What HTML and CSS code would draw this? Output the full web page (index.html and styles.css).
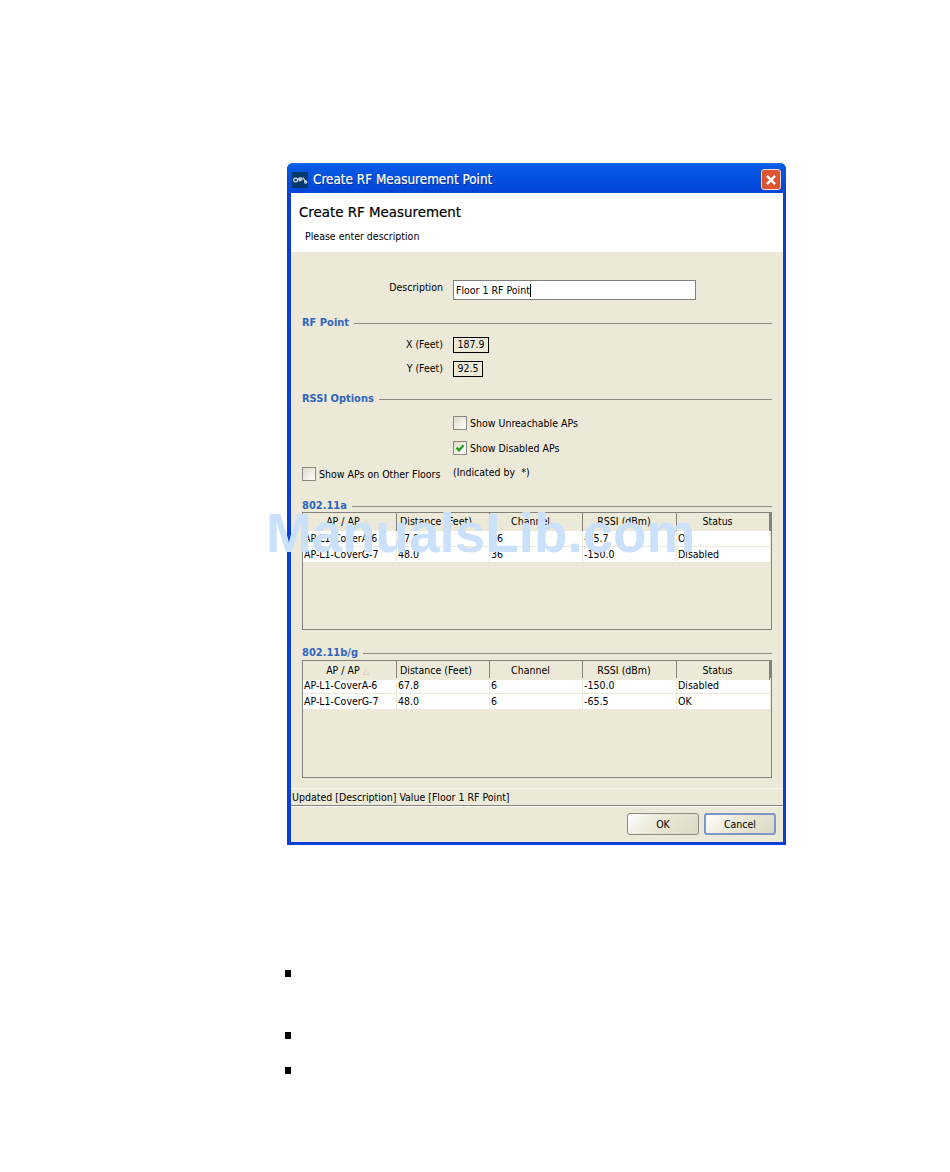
FILE: index.html
```html
<!DOCTYPE html>
<html lang="en">
<head>
<meta charset="utf-8">
<title>Create RF Measurement Point</title>
<link rel="stylesheet" href="styles.css">
</head>
<body>
<main class="page">
  <section class="window">
    <header class="titlebar">
      <svg class="app-icon" width="16" height="16" viewBox="0 0 16 16"><rect width="16" height="16" fill="#03396b"/><g fill="none" stroke="#dfe8f0" stroke-width="1.1"><circle cx="3.6" cy="8" r="1.9"/><path d="M5.5 9.5c.6-2.2 1-3.500 2-3.500s.8 2 .2 3.500"/><circle cx="8.800" cy="7" r="1.300"/><path d="M11 5.500l2.500 4"/><circle cx="13.700" cy="10" r="1.100"/></g></svg>
      <span class="title-text">Create RF Measurement Point</span>
      <span class="close">
        <svg width="20" height="20" viewBox="0 0 20 20"><path d="M5.500 5.500l9 9M14.500 5.500l-9 9" stroke="#fff" stroke-width="2.600" fill="none"/></svg>
      </span>
    </header>
    <div class="body">
      <div class="banner">
        <h1 class="banner-title">Create RF Measurement</h1>
        <p class="banner-sub">Please enter description</p>
      </div>
      <div class="form">
        <div class="row row-desc">
          <span class="label label-up">Description</span>
          <div class="input">Floor 1 RF Point<span class="caret"></span></div>
        </div>
        <div class="legend legend-rf"><span>RF Point</span><i></i></div>
        <div class="row row-x">
          <span class="label label-nudge">X (Feet)</span>
          <span class="value value-x">187.9</span>
        </div>
        <div class="row row-y">
          <span class="label label-nudge">Y (Feet)</span>
          <span class="value value-y">92.5</span>
        </div>
        <div class="legend legend-rssi"><span>RSSI Options</span><i></i></div>
        <div class="row row-c1">
          <span class="label"></span>
          <span class="check-item"><span class="box"></span>Show Unreachable APs</span>
        </div>
        <div class="row row-c2">
          <span class="label"></span>
          <span class="check-item"><span class="box"><svg width="12" height="12" viewBox="0 0 12 12"><path d="M2.500 5.700l2.500 2.500L9.500 3.300" fill="none" stroke="#21a121" stroke-width="2.400"/></svg></span>Show Disabled APs</span>
        </div>
        <div class="row row-c3">
          <span class="check-item"><span class="box"></span>Show APs on Other Floors</span>
          <span class="indicated">(Indicated by&nbsp; *)</span>
        </div>

        <div class="legend legend-a"><span>802.11a</span><i></i></div>
        <div class="table table-a">
          <div class="tr thead">
            <span class="th th-first">AP / AP <b class="sort">△</b></span><span class="th th-dist">Distance (Feet)</span><span class="th">Channel</span><span class="th">RSSI (dBm)</span><span class="th">Status</span>
          </div>
          <div class="tr"><span class="td">AP-L1-CoverA-6</span><span class="td">67.8</span><span class="td">36</span><span class="td">-65.7</span><span class="td">OK</span></div>
          <div class="tr"><span class="td">AP-L1-CoverG-7</span><span class="td">48.0</span><span class="td">36</span><span class="td">-150.0</span><span class="td">Disabled</span></div>
        </div>

        <div class="legend legend-bg"><span>802.11b/g</span><i></i></div>
        <div class="table table-bg">
          <div class="tr thead">
            <span class="th th-first">AP / AP <b class="sort">△</b></span><span class="th th-dist">Distance (Feet)</span><span class="th">Channel</span><span class="th">RSSI (dBm)</span><span class="th">Status</span>
          </div>
          <div class="tr"><span class="td">AP-L1-CoverA-6</span><span class="td">67.8</span><span class="td">6</span><span class="td">-150.0</span><span class="td">Disabled</span></div>
          <div class="tr"><span class="td">AP-L1-CoverG-7</span><span class="td">48.0</span><span class="td">6</span><span class="td">-65.5</span><span class="td">OK</span></div>
        </div>
      </div>
      <div class="status">Updated [Description] Value [Floor 1 RF Point]</div>
      <footer class="footer">
        <button class="btn" type="button">OK</button>
        <button class="btn btn-default" type="button">Cancel</button>
      </footer>
    </div>
  </section>
  <ul class="bullets">
    <li class="bullet"></li>
    <li class="bullet bullet-2"></li>
    <li class="bullet bullet-3"></li>
  </ul>
  <div class="watermark">ManualsLib.com</div>
</main>
</body>
</html>
```
FILE: styles.css
```css
* { box-sizing: border-box; }
html, body { margin: 0; background: #fff; }
body { font-family: "DejaVu Sans", Verdana, sans-serif; font-stretch: condensed; font-size: 10.5px; color: #000; }
.page { position: relative; width: 950px; height: 1172px; padding: 163px 0 0 287px; overflow: hidden; }

.window { width: 499px; height: 682px; display: flex; flex-direction: column; background: #0a3fd6; border-radius: 6px 6px 0 0; }
.titlebar { height: 30px; flex: none; display: flex; align-items: center; padding: 3px 5px 0 5px; color: #fff; border-radius: 6px 6px 0 0;
  background: linear-gradient(#1a6cf0 0, #0a5ae6 10%, #0350dd 50%, #0345d8 100%); }
.app-icon { margin: 0 5px 0 0; flex: none; }
.title-text { font-size: 13.4px; font-weight: 400; flex: 1; text-shadow: 1px 1px 0 #0a2f9a; -webkit-text-stroke: 0.2px #fff; }
.close { width: 20px; height: 21px; border: 1px solid #f3d9cf; border-radius: 3px; background: #dc5431; display: flex; align-items: center; justify-content: center; }

.body { flex: 1; display: flex; flex-direction: column; margin: 0 3px 3px 4px; background: #ece9d8; min-height: 0; }
.banner { height: 59px; flex: none; background: #fff; padding: 12px 0 0 8px; }
.banner-title { margin: 0; font-size: 13.4px; font-stretch: normal; font-weight: 400; line-height: 16px; -webkit-text-stroke: 0.2px #000; }
.banner-sub { margin: 8px 0 0 6px; line-height: 14px; }

.form { flex: none; height: 536px; padding: 28px 11px 0 11px; }
.row { display: flex; align-items: center; }
.label { width: 141px; text-align: right; flex: none; margin-right: 10px; line-height: 14px; }
.label-up { padding-bottom: 6px; }
.label-nudge { padding-bottom: 2px; }
.row-desc { height: 20px; }
.input { width: 243px; height: 20px; background: #fff; border: 1px solid #7f7f7f; padding: 0 0 0 2px; line-height: 19px; display: flex; align-items: center; }
.caret { width: 1px; height: 13px; background: #000; }

.legend { display: flex; align-items: center; gap: 5px; font-weight: 700; font-size: 11px; line-height: 14px; color: #2f66bd; width: 470px; height: 14px; }
.legend i { flex: 1; height: 1px; background: #8c8c84; display: block; }
.legend-rf { margin-top: 16px; }
.row-x { margin-top: 7px; height: 16px; }
.row-y { margin-top: 8px; height: 16px; }
.value { border: 1px solid #000; height: 16px; line-height: 13px; text-align: center; display: block; }
.value-x { width: 36px; }
.value-y { width: 30px; }
.legend-rssi { margin-top: 15px; }
.row-c1 { margin-top: 10px; height: 14px; }
.row-c2 { margin-top: 11px; height: 14px; }
.row-c3 { margin-top: 12px; height: 14px; }
.check-item { display: flex; align-items: center; gap: 3px; white-space: nowrap; line-height: 14px; }
.box { width: 14px; height: 14px; border: 1px solid #8b8b84; flex: none; display: block; background: linear-gradient(135deg, #dcd9c8 0, #f2f1e8 60%, #fff 100%); }
.box svg { display: block; }
.row-c3 .check-item { width: 151px; }
.indicated { margin-top: -5px; }

.legend-a { margin-top: 18px; }
.legend-bg { margin-top: 16px; }
.table { width: 470px; border: 1px solid #83837b; }
.table-a { height: 118px; margin-top: -1px; }
.table-bg { height: 118px; margin-top: 0; }
.tr { display: grid; grid-template-columns: 94px 93px 93px 94px 94px; background: #fff; height: 16px; }
.thead { background: #ece9d8; height: 17px; border-bottom: 1px solid #83837b; }
.table-a .thead { height: 18px; }
.th { text-align: center; border-right: 1px solid #83837b; line-height: 18px; white-space: nowrap; background: #ece9d8; padding-right: 11px; }
.th-first { padding-right: 4px; }
.table-a .th { line-height: 17px; }
.th:last-child { border-right-width: 2px; }
.th-dist { text-align: left; padding: 0 0 0 3px; }
.sort { font-weight: 400; color: #c9c7b6; font-size: 9px; }
.td { padding-left: 1px; border-right: 1px solid #ece9d8; border-bottom: 1px solid #ece9d8; line-height: 14px; white-space: nowrap; overflow: hidden; }

.status { height: 18px; flex: none; border-top: 1px solid #f7f6ef; border-bottom: 1px solid #83837b; padding-left: 1px; line-height: 16px; }
.footer { flex: 1; display: flex; justify-content: flex-end; gap: 5px; padding: 6px 7px 0 0; border-top: 1px solid #fff; }
.btn { width: 72px; height: 22px; padding: 0; margin: 0; font: inherit; color: #000; border: 1px solid #8a8a80; border-radius: 3px;
  background: linear-gradient(135deg, #fff 0, #ece9d8 40%, #dcd8c6 100%); }
.btn-default { border: 2px solid #7b98c9; }

.bullets { list-style: none; margin: 0; padding: 0; position: absolute; left: 285px; top: 970px; }
.bullet { width: 6px; height: 7px; background: #000; }
.bullet-2 { margin-top: 55px; }
.bullet-3 { margin-top: 28px; }

.watermark { position: absolute; left: 266px; top: 500px; font-family: "Liberation Sans", Arial, sans-serif; font-stretch: normal; font-weight: 700; font-size: 54.8px; line-height: 66px; color: #cbe0fa; white-space: nowrap; }
```
